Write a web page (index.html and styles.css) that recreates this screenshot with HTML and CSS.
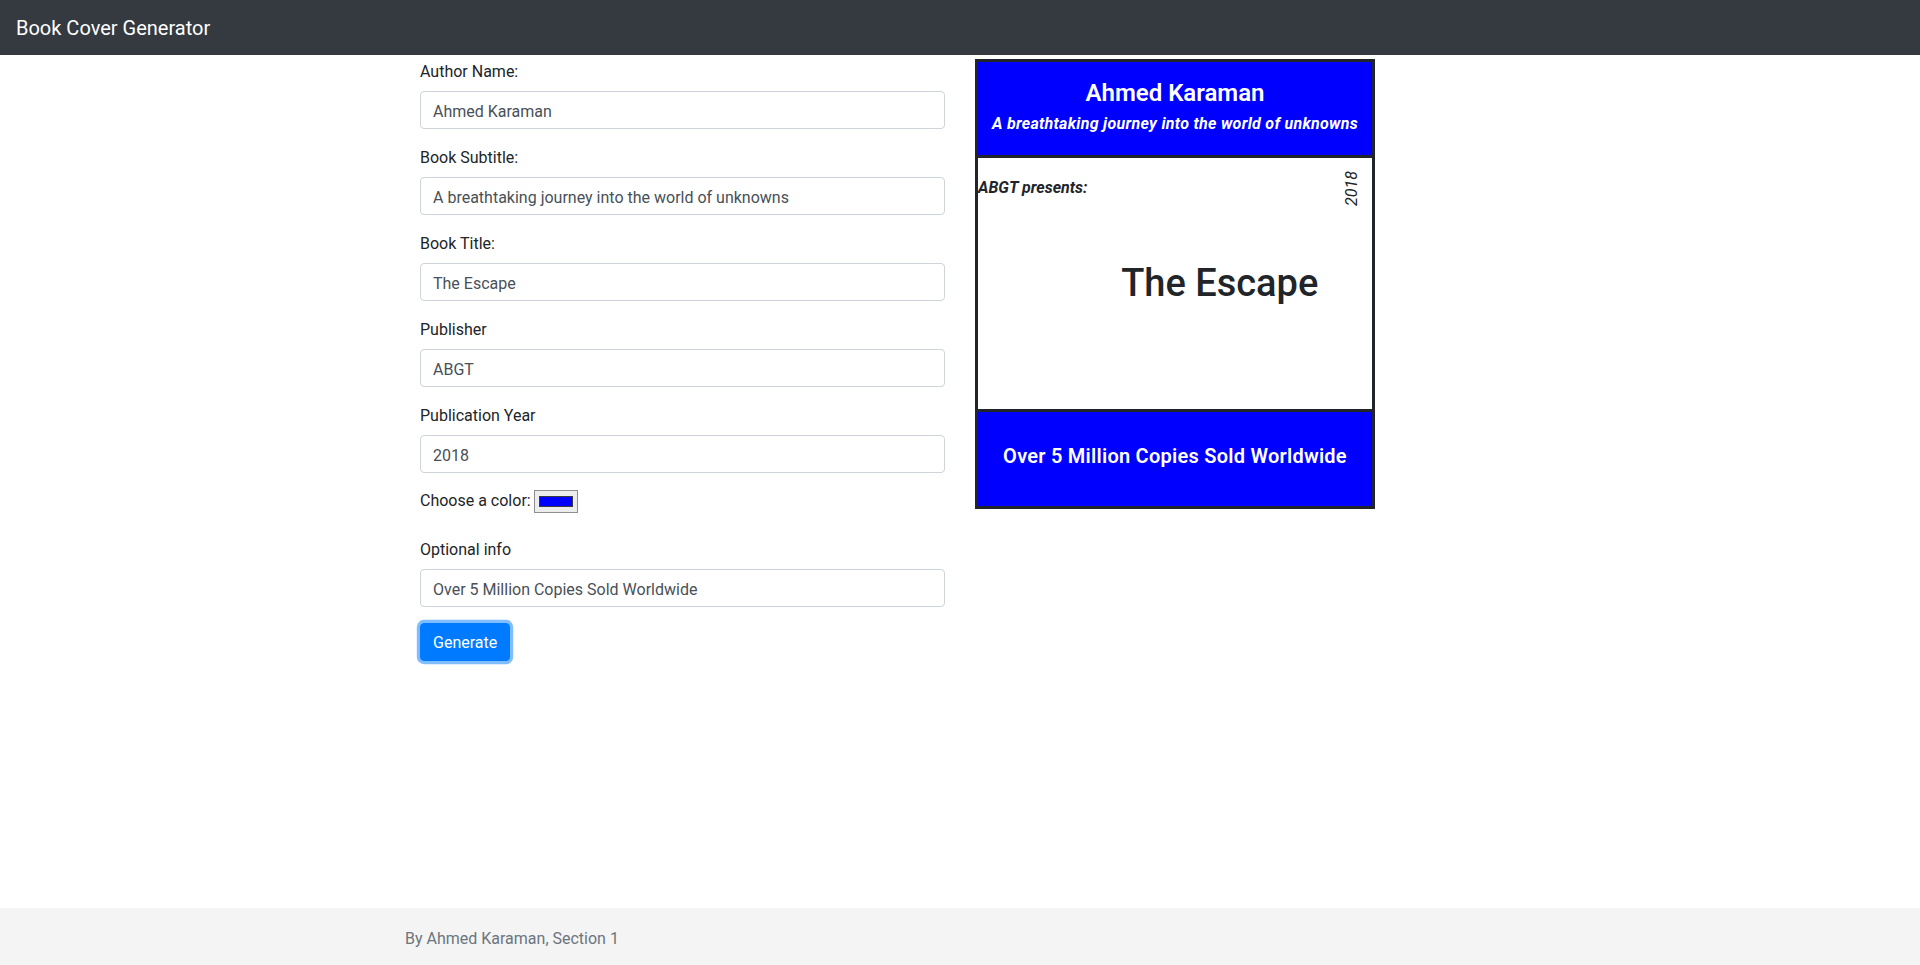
FILE: index.html
```html
<!DOCTYPE html>
<html lang="en">
<head>
<meta charset="utf-8">
<title>Book Cover Generator</title>
<link rel="stylesheet" href="styles.css">
</head>
<body>
<nav class="navbar">
  <a class="navbar-brand" href="#">Book Cover Generator</a>
</nav>

<main class="container">
  <div class="row">
    <div class="col">
      <form class="cover-form">
        <div class="form-group">
          <label class="form-label" for="author">Author Name:</label>
          <input class="form-control" id="author" type="text" value="Ahmed Karaman">
        </div>
        <div class="form-group">
          <label class="form-label" for="subtitle">Book Subtitle:</label>
          <input class="form-control" id="subtitle" type="text" value="A breathtaking journey into the world of unknowns">
        </div>
        <div class="form-group">
          <label class="form-label" for="title">Book Title:</label>
          <input class="form-control" id="title" type="text" value="The Escape">
        </div>
        <div class="form-group">
          <label class="form-label" for="publisher">Publisher</label>
          <input class="form-control" id="publisher" type="text" value="ABGT">
        </div>
        <div class="form-group">
          <label class="form-label" for="year">Publication Year</label>
          <input class="form-control" id="year" type="text" value="2018">
        </div>
        <div class="color-group">
          <label class="color-label" for="color">Choose a color:</label>
          <input class="color-input" id="color" type="color" value="#0000ff">
        </div>
        <div class="form-group">
          <label class="form-label" for="info">Optional info</label>
          <input class="form-control" id="info" type="text" value="Over 5 Million Copies Sold Worldwide">
        </div>
        <button class="btn-primary" type="button">Generate</button>
      </form>
    </div>
    <div class="col">
      <div class="cover">
        <div class="cover-top">
          <h3 class="cover-author">Ahmed Karaman</h3>
          <p class="cover-subtitle">A breathtaking journey into the world of unknowns</p>
        </div>
        <div class="cover-mid">
          <p class="cover-publisher">ABGT presents:</p>
          <h1 class="cover-title">The Escape</h1>
          <p class="cover-year">2018</p>
        </div>
        <div class="cover-bottom">
          <h5 class="cover-info">Over 5 Million Copies Sold Worldwide</h5>
        </div>
      </div>
    </div>
  </div>
</main>

<footer class="footer">
  <div class="container">
    <span class="footer-text">By Ahmed Karaman, Section 1</span>
  </div>
</footer>
</body>
</html>
```
FILE: styles.css
```css
* { box-sizing: border-box; }

html, body { height: 100%; }

body {
  margin: 0;
  font-family: Roboto, "Liberation Sans", sans-serif;
  font-size: 16px;
  line-height: 1.5;
  color: #212529;
  background: #fff;
  display: flex;
  flex-direction: column;
  min-height: 965px;
}

/* Navbar */
.navbar {
  height: 55px;
  flex: none;
  background: #343a40;
  display: flex;
  align-items: center;
  padding: 1px 16px 0;
}
.navbar-brand {
  color: #fff;
  font-size: 20px;
  line-height: 30px;
  text-decoration: none;
}

/* Layout */
.container {
  width: 1140px;
  margin: 0 auto;
  padding: 0 15px;
}
main.container { flex: 1; }

.row {
  display: flex;
  margin: 4px -15px 0;
}
.col {
  width: 570px;
  padding: 0 15px;
}

/* Form */
.cover-form {
  padding-left: 15px;
}
.form-group { margin-bottom: 16px; }
.form-label {
  display: block;
  margin-bottom: 7px;
  padding-top: 1px;
  line-height: 24px;
}
.form-control {
  display: block;
  width: 100%;
  height: 38px;
  padding: 7px 12px 5px;
  font: inherit;
  line-height: 24px;
  color: #495057;
  background: #fff;
  border: 1px solid #ced4da;
  border-radius: 4px;
  margin: 0;
}

.color-group {
  display: flex;
  align-items: flex-end;
  height: 24px;
  margin-bottom: 24px;
}
.color-label { line-height: 24px; padding-top: 1px; }
.color-input {
  width: 44px;
  height: 23px;
  margin: 0 0 0 3px;
  padding: 5px 4px;
  border: 1px solid #8f8f8f;
  background: #ececec;
  cursor: pointer;
}
.color-input::-webkit-color-swatch-wrapper { padding: 0; }
.color-input::-webkit-color-swatch { border: 1px solid #3a3a3a; border-radius: 0; }

.btn-primary {
  display: inline-block;
  font: inherit;
  line-height: 24px;
  padding: 7px 12px 5px;
  color: #fff;
  background: #007bff;
  border: 1px solid #007bff;
  border-radius: 4px;
  box-shadow: 0 0 0 3.2px rgba(0, 123, 255, 0.5);
  margin: 0;
  cursor: pointer;
}

/* Cover */
.cover {
  width: 400px;
  height: 450px;
  border: 3px solid #212529;
  display: flex;
  flex-direction: column;
}
.cover-top {
  height: 96px;
  flex: none;
  background: #0000ff;
  border-bottom: 3px solid #212529;
  color: #fff;
  text-align: center;
  display: flex;
  flex-direction: column;
  justify-content: center;
  padding-bottom: 2px;
}
.cover-author {
  margin: 0;
  font-size: 24px;
  font-weight: 600;
  line-height: 28.8px;
}
.cover-subtitle {
  margin: 4px 0 0;
  font-size: 16px;
  font-weight: 700;
  font-style: italic;
  letter-spacing: 0.3px;
  line-height: 24px;
}

.cover-mid {
  flex: 1;
  background: #fff;
  display: flex;
  align-items: flex-start;
  padding: 13px 8px 12px 0;
}
.cover-publisher {
  flex: none;
  margin: 5px 0 0;
  font-weight: 700;
  font-style: italic;
  line-height: 24px;
}
.cover-title {
  flex: 1;
  align-self: center;
  margin: 0;
  padding-left: 12px;
  text-align: center;
  font-size: 38px;
  font-weight: 500;
  line-height: 45.6px;
}
.cover-year {
  flex: none;
  margin: 0;
  font-style: italic;
  line-height: 24px;
  writing-mode: vertical-rl;
  transform: rotate(180deg);
}

.cover-bottom {
  height: 97px;
  flex: none;
  background: #0000ff;
  border-top: 3px solid #212529;
  color: #fff;
  display: flex;
  align-items: center;
  justify-content: center;
  padding-bottom: 6px;
}
.cover-info {
  margin: 0;
  font-size: 20px;
  font-weight: 600;
  letter-spacing: 0.25px;
  line-height: 24px;
}

/* Footer */
.footer {
  flex: none;
  height: 57px;
  background: #f4f4f4;
  display: flex;
  align-items: center;
}
.footer-text {
  color: #6c757d;
  line-height: 24px;
  display: block;
  padding-top: 4px;
}
```
